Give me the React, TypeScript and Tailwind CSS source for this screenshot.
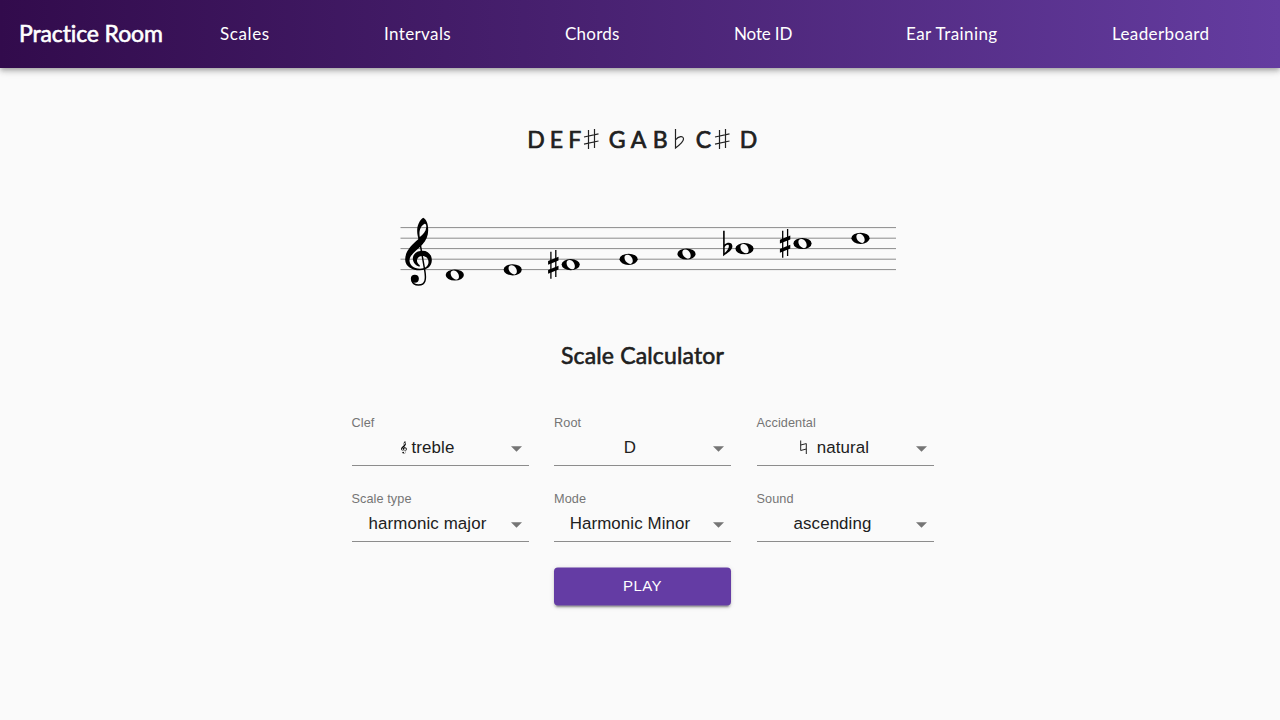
import type { ReactNode } from "react";

const navItems = [
  { label: "Scales", style: "w-[50px] tracking-[0.62px]" },
  { label: "Intervals", style: "w-[67px] tracking-[0.38px]" },
  { label: "Chords", style: "w-[55px] tracking-[0.25px]" },
  { label: "Note ID", style: "w-[58px] tracking-[-0.15px]" },
  { label: "Ear Training", style: "w-[92px] tracking-[0.43px]" },
  { label: "Leaderboard", style: "w-[97px] tracking-[0.38px]" },
];

function ClefPath() {
  return (
    <>
      <path
        fill="#000"
        fillRule="evenodd"
        d="M83 38C72 46 65 60 65 78C65 88 67 95 69 102C47 121 29 139 29 164C29 184 50 196 73 196C95 196 109 183 109 166C109 149 98 137 81 137C62 137 51 149 52 163C53 174 62 183 72 185L73 181C66 177 63 169 65 163C68 156 73 153 80 153C91 153 99 160 99 171C99 184 88 191 73 191C54 191 42 180 42 166C42 150 64 136 80 119C93 106 99 90 98 72C98 57 93 43 83 38ZM88 56C92 57 93 63 92 68C91 79 83 88 73 96C70 83 73 62 88 56Z"
      />
      <path fill="none" stroke="#000" strokeWidth="4.4" d="M71 99L88 198C92 222 91 240 69 240C58 240 51 234 49 226" />
      <circle cx="58" cy="221" r="12" />
    </>
  );
}

function SmallClef() {
  return (
    <svg className="mr-[5px] h-[13px] w-[6px] shrink-0" viewBox="28 36 84 208" preserveAspectRatio="none">
      <ClefPath />
    </svg>
  );
}

function Sharp() {
  return (
    <svg className="h-6 w-[18px] shrink-0" viewBox="0 0 18 24" fill="none" stroke="#222" strokeWidth="1.2">
      <path d="M5.500 3V22M11.500 2V21M1 10L15.500 6.800M1 17.200L15.500 14" />
    </svg>
  );
}

function Flat() {
  return (
    <svg className="h-6 w-3 shrink-0" viewBox="0 0 12 24" fill="none" stroke="#222" strokeWidth="1.2">
      <path d="M2.500 2V21C6.500 18 10.500 15 10.500 12C10.500 8.500 5.500 9 2.500 13" />
    </svg>
  );
}

function Natural() {
  return (
    <svg className="mr-[10px] h-[15px] w-[7px] shrink-0" viewBox="0 0 7 15" fill="none" stroke="#222">
      <path d="M.7 .5V10.500L6.300 9M6.300 14V3.600L.7 5" />
    </svg>
  );
}

const notes = [
  { x: 454.3, y: 275 },
  { x: 512.2, y: 269.8 },
  { x: 570.2, y: 264.6, mark: "sharp" },
  { x: 628.1, y: 259.3 },
  { x: 686, y: 254 },
  { x: 744, y: 248.7, mark: "flat" },
  { x: 802, y: 243.5, mark: "sharp" },
  { x: 860, y: 238.3 },
];

function Staff() {
  return (
    <svg className="h-[90px] w-[500px]" viewBox="398 205 500 90" role="img" aria-label="Scale notation">
      {[227.6, 238.2, 248.6, 259.2, 269.6].map((y) => (
        <path key={y} d={`M400 ${y}H895.5`} stroke="#8c8c8c" />
      ))}
      <g transform="translate(395 205) scale(.3333)">
        <ClefPath />
      </g>
      {notes.map((n) => (
        <g key={n.x} transform={`translate(${n.x} ${n.y})`}>
          <ellipse rx="9.100" ry="5.600" />
          <path
            fill="#fafafa"
            d="M-1.600-4.600C-4-4.400-4.600-2.200-3.800.3C-3 3 0 4.900 2 4.600C4.300 4.200 4.600 1.800 3.700-.7C2.700-3.300 .6-4.800-1.600-4.600Z"
          />
          {n.mark === "sharp" && (
            <g>
              <path stroke="#000" strokeWidth="1.3" d="M-19.800-12.800V14.200M-14.900-14.500V12.500" />
              <path d="M-22.600-3.700L-12.200-7.900V-4.100L-22.600 .1ZM-22.600 5.400L-12.200 1.200V5L-22.600 9.200Z" />
            </g>
          )}
          {n.mark === "flat" && (
            <path
              fillRule="evenodd"
              d="M-21.400-18H-19.800V-4.100C-17.500-6.700-12.100-6.800-12.100-2.400C-12.100 1.700-17 4.300-21.400 7.500ZM-19.800-1.800V4.300C-17.300 2.300-15.600-.2-15.600-2.600C-15.600-4.800-18.300-4.300-19.800-1.800Z"
            />
          )}
        </g>
      ))}
    </svg>
  );
}

function Field({ label, children }: { label: string; children: ReactNode }) {
  return (
    <div className="flex h-[50px] flex-col border-b border-[#8c8c8c]">
      <span className="h-[15px] text-[12.7px] leading-[15px] tracking-[0.08px] text-[#757575]">{label}</span>
      <div className="mt-1 flex h-[26px] items-center">
        <div className="flex flex-1 items-center justify-center pr-[7px] text-[16.9px] tracking-[0.1px] whitespace-nowrap text-[#202020]">{children}</div>
        <svg className="mr-[7px] h-[6px] w-[11px] shrink-0 translate-y-px" viewBox="0 0 11 6">
          <path d="M0 .3H11L5.500 5.800Z" fill="#757575" />
        </svg>
      </div>
    </div>
  );
}

export default function App() {
  return (
    <div className="h-[720px] w-full overflow-hidden bg-[#fafafa] font-['Liberation_Sans',Arial,sans-serif] text-[#202020]">
      <header className="flex h-[68px] items-center bg-linear-to-r from-[#320b4c] to-[#643ca0] pr-[14px] pb-px pl-[19px] font-['Lato',sans-serif] text-white shadow-[0_2px_4px_-1px_rgba(0,0,0,0.2),0_4px_5px_0_rgba(0,0,0,0.14),0_1px_10px_0_rgba(0,0,0,0.12)]">
        <h1 className="w-[144px] shrink-0 text-[23px] font-normal tracking-[-0.13px] whitespace-nowrap [-webkit-text-stroke:0.6px]">Practice Room</h1>
        <nav className="flex flex-1 justify-around text-[17px]">
          {navItems.map((item) => (
            <a key={item.label} className={`whitespace-nowrap ${item.style}`}>
              {item.label}
            </a>
          ))}
        </nav>
      </header>
      <main className="flex flex-col items-center pl-[5px]">
        <h2 className="mt-[57px] flex h-7 items-center font-['Lato',sans-serif] text-[23px] leading-7 font-normal [-webkit-text-stroke:0.7px]">
          <span className="w-[22.5px]">D</span>
          <span className="w-[18.5px]">E</span>
          <span className="w-[14.5px]">F</span>
          <Sharp />
          <span className="ml-[8px] w-[22px]">G</span>
          <span className="w-[22px]">A</span>
          <span className="w-[20px]">B</span>
          <Flat />
          <span className="ml-[11px] w-[18px]">C</span>
          <Sharp />
          <span className="ml-[8px] w-[18px]">D</span>
        </h2>
        <div className="mt-[52px] flex w-[500px] translate-x-[5.5px]">
          <Staff />
        </div>
        <h2 className="mt-[46px] h-7 font-['Lato',sans-serif] text-[23px] leading-7 font-normal tracking-[0.15px] [-webkit-text-stroke:0.6px]">Scale Calculator</h2>
        <section className="mt-[47px] grid w-[582px] grid-cols-3 gap-x-[25.5px] gap-y-[26px]">
          <Field label="Clef"><SmallClef />treble</Field>
          <Field label="Root">D</Field>
          <Field label="Accidental"><span className="flex items-center pl-1"><Natural />natural</span></Field>
          <Field label="Scale type">harmonic major</Field>
          <Field label="Mode">Harmonic Minor</Field>
          <Field label="Sound">ascending</Field>
          <button className="col-start-2 h-[37.5px] -translate-y-[0.5px] rounded-[4px] bg-[#643ca4] pb-px text-[15px] tracking-[0.4px] text-white shadow-[0_3px_1px_-2px_rgba(0,0,0,0.2),0_2px_2px_0_rgba(0,0,0,0.14),0_1px_5px_0_rgba(0,0,0,0.12)]">
            PLAY
          </button>
        </section>
      </main>
    </div>
  );
}
